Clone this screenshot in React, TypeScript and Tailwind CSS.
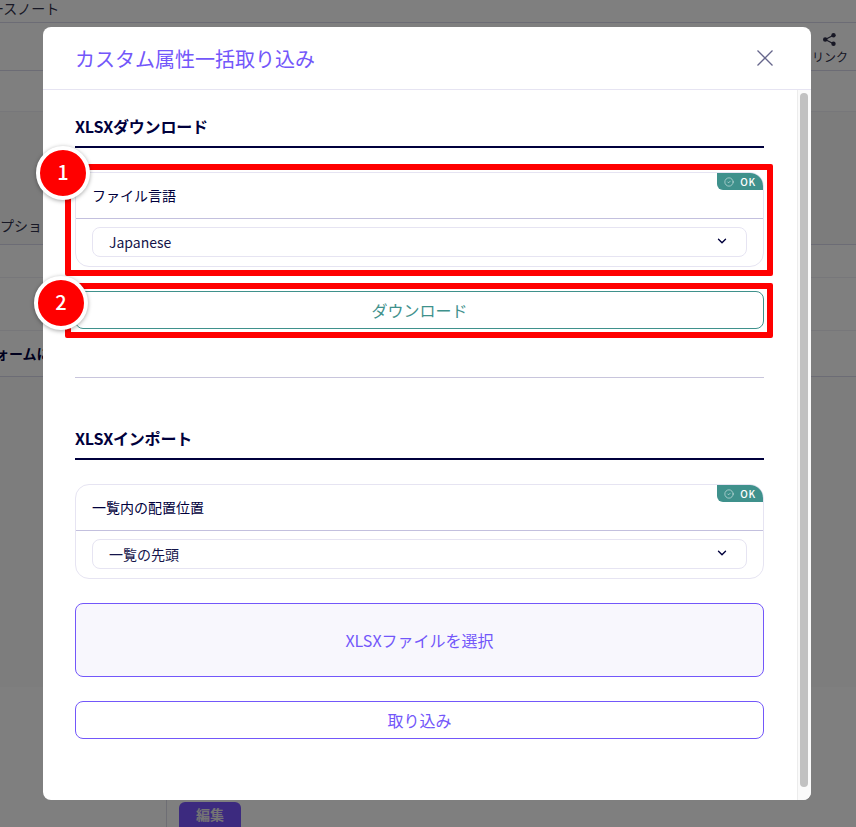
import React from 'react';
import { ChevronDown, CircleCheck } from 'lucide-react';

function OkBadge() {
  return (
    <div className="absolute top-0 right-0 flex h-[17px] w-[46px] items-center justify-center gap-[6px] rounded-tr-[13px] rounded-bl-[6px] bg-[#3f918c] text-[10px] leading-none font-medium tracking-[0.6px] text-white">
      <CircleCheck size={10} strokeWidth={1.2} />
      <span>OK</span>
    </div>
  );
}

function SelectCard({ label, value }: { label: string; value: string }) {
  return (
    <div className="relative h-[95px] rounded-[14px] border border-[#e6e4f2] bg-white">
      <OkBadge />
      <div className="flex h-[46px] items-center border-b border-[#c3c0de] pb-[2px] pl-4 text-sm text-[#00003c]">
        {label}
      </div>
      <div className="mx-4 mt-[8px] flex h-[30px] items-center justify-between rounded-lg border border-[#e6e4f2] pr-[16px] pl-4 text-sm text-[#14144a]">
        <span>{value}</span>
        <ChevronDown size={14} strokeWidth={2.4} className="mt-[-2px] mr-[1px] text-[#00003c]" />
      </div>
    </div>
  );
}

function SectionHeading({ title, className }: { title: string; className: string }) {
  return (
    <div className={`${className} border-b-2 border-[#00003c] pb-[8px] text-base leading-6 font-bold tracking-[-0.2px] text-[#00003c]`}>
      {title}
    </div>
  );
}

function BackgroundPage() {
  return (
    <div className="h-[827px] overflow-hidden bg-white text-[#30304a]">
      <div className="h-[23px] border-b border-[#d9d9ea] text-sm leading-[17px] whitespace-nowrap">
        <span className="ml-[-24px]">ノースノート</span>
      </div>
      <div className="flex h-[48px] justify-end border-b border-[#d9d9ea] pt-[10px] pr-[8px]">
        <div className="flex flex-col items-center">
          <svg width="13" height="13" viewBox="0 0 13 13" fill="#30304a">
            <circle cx="10.5" cy="2.2" r="2.2" />
            <circle cx="2.2" cy="6.5" r="2.2" />
            <circle cx="10.5" cy="10.8" r="2.2" />
            <path d="M2.2 6.500 10.5 2.2M2.2 6.5l8.3 4.3" stroke="#30304a" strokeWidth="1.2" />
          </svg>
          <span className="pt-[2px] text-xs leading-[17px]">リンク</span>
        </div>
      </div>
      <div className="h-[41px] border-b border-[#eeeef5]" />
      <div className="h-[133px] border-b border-[#d9d9ea] bg-[#f8f8f9] pt-[103px] text-sm leading-5 whitespace-nowrap">
        <span className="ml-[-14px]">オプション</span>
      </div>
      <div className="h-[33px] border-b border-[#eeeef5]" />
      <div className="h-[53px] border-b border-[#eeeef5]" />
      <div className="h-[46px] border-b border-[#d9d9ea] pt-[12px] text-sm leading-5 font-bold text-[#00003c] whitespace-nowrap">
        <span className="ml-[-19px]">フォームに</span>
      </div>
      <div className="h-[310px] bg-[#fafafa]" />
      <div className="flex h-[140px] pl-[166px]">
        <div className="border-l border-[#dcdce8] pt-[115px] pl-3">
          <div className="flex h-[30px] w-[62px] items-start justify-center rounded-md bg-[#7854ff] pt-[2px] text-sm font-bold text-[#e8e8e8]">
            編集
          </div>
        </div>
      </div>
    </div>
  );
}

export default function App() {
  return (
    <div className="relative h-[827px] w-[856px] overflow-hidden font-['Noto_Sans_CJK_JP','Noto_Sans',sans-serif]">
      <BackgroundPage />

      {/* Modal overlay */}
      <div className="absolute inset-0 bg-black/50 pt-[27px] pl-[43px]">
        <div className="flex h-[773px] w-[768px] flex-col overflow-hidden rounded-lg bg-white">
          <div className="flex h-[63px] shrink-0 items-center justify-between border-b border-[#e6e4f2] pr-[38px] pl-[32px]">
            <h1 className="pt-[1px] text-[20px] font-normal text-[#7357fa]">カスタム属性一括取り込み</h1>
            <svg width="16" height="16" viewBox="0 0 16 16" stroke="#66668c" strokeWidth="1.3" className="mt-[-1px]">
              <path d="M.5.5l15 15M15.500.5l-15 15" />
            </svg>
          </div>

          <div className="flex min-h-0 flex-1">
            <div className="flex-1 pr-[33px] pl-[32px]">
              <SectionHeading title="XLSXダウンロード" className="pt-[24px]" />
              <div className="mt-[24px]">
                <SelectCard label="ファイル言語" value="Japanese" />
              </div>
              <button className="mt-[24px] flex h-[38px] w-full items-center justify-center rounded-lg border border-[#3f918c] text-base text-[#3f918c]">
                ダウンロード
              </button>
              <div className="mt-[48px] h-px bg-[#c8c5dc]" />
              <SectionHeading title="XLSXインポート" className="pt-[48px]" />
              <div className="mt-[24px]">
                <SelectCard label="一覧内の配置位置" value="一覧の先頭" />
              </div>
              <button className="mt-[24px] flex h-[74px] w-full items-center justify-center rounded-lg border border-[#7357fa] bg-[#f8f7fd] text-base text-[#7357fa]">
                XLSXファイルを選択
              </button>
              <button className="mt-[24px] flex h-[38px] w-full items-center justify-center rounded-lg border border-[#7357fa] text-base text-[#7357fa]">
                取り込み
              </button>
            </div>

            {/* Scrollbar */}
            <div className="w-[14px] shrink-0 border-l border-[#ececec] bg-[#fafafa] pt-[3px] pl-[2px]">
              <div className="h-[694px] w-[8px] rounded bg-[#c1c1c1]" />
            </div>
          </div>
        </div>
      </div>

      {/* Annotations */}
      <div className="absolute top-[164px] left-[65px] h-[112px] w-[708px] rounded-[2px] border-[6px] border-[#ff0000]" />
      <div className="absolute top-[283px] left-[65px] h-[55px] w-[708px] rounded-[2px] border-[6px] border-[#ff0000]" />
      <div className="absolute top-[146px] left-[36px] flex h-[54px] w-[54px] items-center justify-center rounded-full border-4 border-white bg-[#ff0000] pb-[2px] text-xl font-medium text-white shadow-[0_1px_4px_rgba(0,0,0,0.35)]">
        1
      </div>
      <div className="absolute top-[276px] left-[34px] flex h-[54px] w-[54px] items-center justify-center rounded-full border-4 border-white bg-[#ff0000] pb-[2px] text-xl font-medium text-white shadow-[0_1px_4px_rgba(0,0,0,0.35)]">
        2
      </div>
    </div>
  );
}
